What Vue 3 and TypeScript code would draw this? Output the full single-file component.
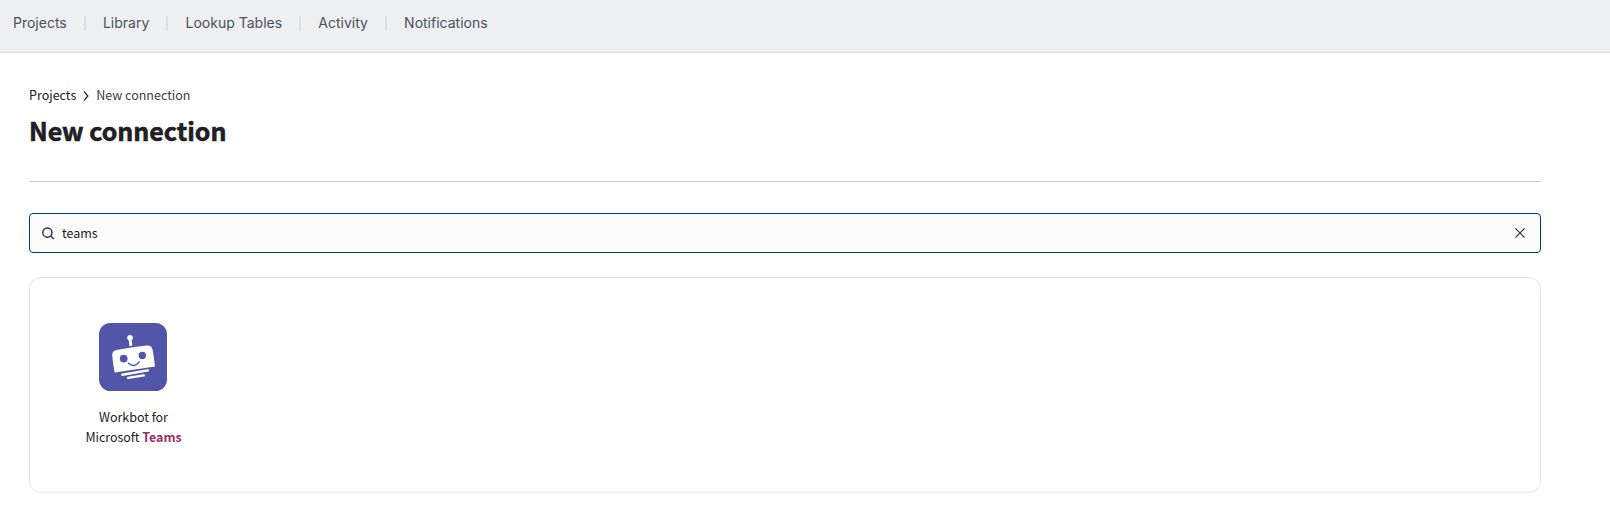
<script setup lang="ts">
const navItems: string[] = ['Projects', 'Library', 'Lookup Tables', 'Activity', 'Notifications']
</script>

<template>
  <div class="page">
    <nav class="topbar">
      <a v-for="item in navItems" :key="item" class="nav-item">{{ item }}</a>
    </nav>
    <main class="content">
      <div class="crumbs">
        <a class="crumb-link">Projects</a>
        <svg class="chevron" width="6" height="10" viewBox="0 0 6 10"><path d="M1 .4 4.8 5 1 9.6" /></svg>
        <span class="crumb-current">New connection</span>
      </div>
      <h1>New connection</h1>
      <div class="search">
        <svg width="13" height="13" viewBox="0 0 13 13"><circle cx="5.4" cy="5.6" r="4.6" /><path d="m8.700 9 3.200 3.100" /></svg>
        <span class="query">teams</span>
        <svg class="clear" width="10" height="10" viewBox="0 0 10 10"><path d="m.4.4 9.2 9.2M9.6.4.4 9.6" /></svg>
      </div>
      <section class="results">
        <div class="app">
          <svg class="logo" width="68" height="68" viewBox="0 0 68 68">
            <rect width="68" height="68" rx="11.5" fill="#5256a9" />
            <g fill="#fff">
              <circle cx="31" cy="14.8" r="2.8" />
              <path d="m29.700 15 2.700-.2 .9 8-2.900.3z" />
              <path d="M17.400 27Q32 24.300 47.500 22.600q5.200-.4 6.100 4.200 1.500 8 2.400 16.600L15.700 49.600Q14 41 13.200 32.500q-.1-4.700 4.200-5.500z" />
            </g>
            <circle cx="24.700" cy="35.600" r="3.900" fill="#5256a9" />
            <circle cx="43.300" cy="32.500" r="3.700" fill="#5256a9" />
            <g fill="none" stroke-linecap="round">
              <path d="M29.500 40.300q5.700 5.200 10.700-1.400" stroke="#5256a9" stroke-width="1.500" />
              <path d="m23.300 51.700 25.600-4.300" stroke="#fff" stroke-width="2.400" />
              <path d="m29 54.900 15.800-2.500" stroke="#fff" stroke-width="2.400" />
            </g>
          </svg>
          <div class="name">Workbot for<br />Microsoft <b>Teams</b></div>
        </div>
      </section>
    </main>
  </div>
</template>

<style>
body { background: #fff; }
</style>

<style scoped>
.page {
  height: 505px;
  overflow: hidden;
  font-family: "Noto Sans CJK SC", "Noto Sans", sans-serif;
  font-size: 12.5px;
  color: #1f2024;
}
.topbar {
  box-sizing: border-box;
  height: 53px;
  padding: 13px 13px 0;
  display: flex;
  align-items: flex-start;
  background: #eeeff1;
  border-bottom: 1px solid #d8dae1;
  font: 14px/20px Inter, sans-serif;
  color: #4b515d;
}
.nav-item { display: flex; align-items: center; }
.nav-item + .nav-item::before {
  content: "";
  width: 2px;
  height: 15px;
  margin: 0 17.1px;
  background: #dcdee2;
}
.content { margin-left: 29px; width: 1512px; }
.crumbs {
  height: 20px;
  padding-top: 32px;
  display: flex;
  align-items: center;
  line-height: 20px;
}
.chevron { margin: 1px 7px 0; }
svg { flex: none; }
.chevron path, .search svg * {
  fill: none;
  stroke: #30323a;
  stroke-width: 1.4;
}
.crumb-current { color: #3b3d47; }
h1 {
  box-sizing: border-box;
  height: 77px;
  margin: 0;
  padding-top: 7px;
  border-bottom: 1px solid #ced1da;
  font-size: 25px;
  line-height: 36px;
  font-weight: 700;
  letter-spacing: -0.02px;
  -webkit-text-stroke: 0.6px #1f2024;
}
.search {
  box-sizing: border-box;
  height: 40px;
  margin-top: 31px;
  padding: 0 15px 0 12px;
  display: flex;
  align-items: center;
  border: 1px solid #0037a0;
  border-radius: 4px;
  background: #fcfcfc;
}
.query { margin: -1px 0 0 7px; }
.clear { margin-left: auto; }
.search .clear path { stroke-width: 1.2; }
.results {
  box-sizing: border-box;
  height: 216px;
  margin-top: 24px;
  padding: 45px 0 0 43px;
  border: 1px solid #e4e5e7;
  border-radius: 12px;
}
.app {
  width: 120px;
  display: flex;
  flex-direction: column;
  align-items: center;
}
.name {
  margin: 16px 0 0 1px;
  line-height: 20px;
  letter-spacing: -0.04px;
  text-align: center;
  white-space: nowrap;
}
.name b { color: #9b3068; }
</style>
